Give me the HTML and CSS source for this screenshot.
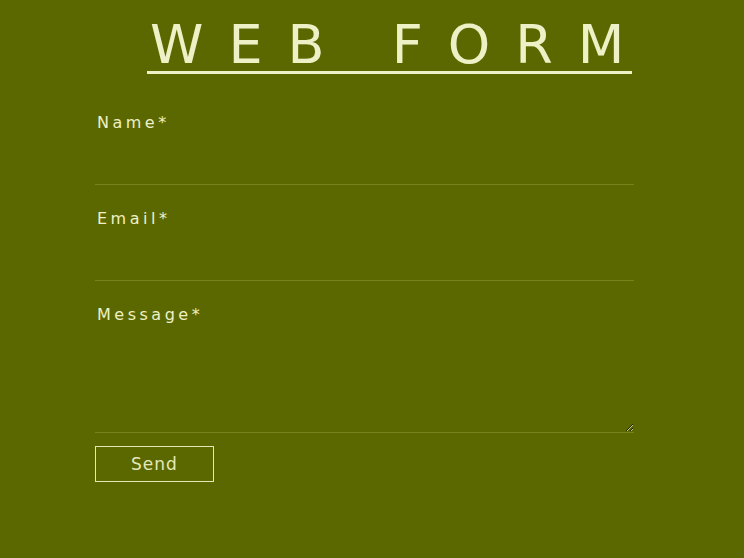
FILE: index.html
```html
<!DOCTYPE html>
<html lang="en">
<head>
<meta charset="utf-8">
<title>Web Form</title>
<link rel="stylesheet" href="styles.css">
</head>
<body>
<div class="page">
  <h1 class="title">WEB FORM</h1>
  <form class="form">
    <div class="field">
      <label class="label" for="name">Name*</label>
      <input class="input" id="name" type="text">
    </div>
    <div class="field">
      <label class="label" for="email">Email*</label>
      <input class="input" id="email" type="email">
    </div>
    <div class="field">
      <label class="label" for="msg">Message*</label>
      <textarea class="textarea" id="msg"></textarea>
    </div>
    <button class="send" type="button">Send</button>
  </form>
</div>
</body>
</html>
```

FILE: styles.css
```css
html, body {
  margin: 0;
  padding: 0;
  background: #5b6800;
  height: 100%;
}
body {
  font-family: "DejaVu Sans", sans-serif;
  color: #eef0c6;
}
.page {
  padding-top: 22px;
}
.title {
  margin: 0 0 0 147px;
  width: 485px;
  box-sizing: border-box;
  white-space: nowrap;
  overflow: visible;
  text-align: left;
  font-family: "DejaVu Sans", sans-serif;
  font-weight: 400;
  font-size: 54px;
  line-height: 46px;
  letter-spacing: 25px;
  padding-left: 3px;
  padding-bottom: 3px;
  color: #eef0c6;
  border-bottom: 3px solid #eef0c6;
}
.form {
  margin: 39px 0 0 95px;
  width: 539px;
  display: flex;
  flex-direction: column;
}
.field {
  display: flex;
  flex-direction: column;
  margin-bottom: 24px;
}
.label {
  font-size: 16px;
  letter-spacing: 3.5px;
  padding-left: 2px;
  line-height: 20px;
  color: #eef0c6;
}
.input {
  margin: 0;
  height: 52px;
  box-sizing: border-box;
  background: transparent;
  border: none;
  border-bottom: 1px solid #77821e;
  outline: none;
  color: #eef0c6;
}
.textarea {
  margin: 0;
  height: 108px;
  box-sizing: border-box;
  background: transparent;
  border: none;
  border-bottom: 1px solid #77821e;
  outline: none;
  resize: vertical;
  color: #eef0c6;
}
.send {
  align-self: flex-start;
  margin-top: -11px;
  width: 119px;
  height: 36px;
  background: transparent;
  border: 1px solid #e4e8b8;
  color: #e4e8b8;
  font-family: "DejaVu Sans", sans-serif;
  font-size: 17px;
  letter-spacing: 1px;
  padding: 0;
}
```
